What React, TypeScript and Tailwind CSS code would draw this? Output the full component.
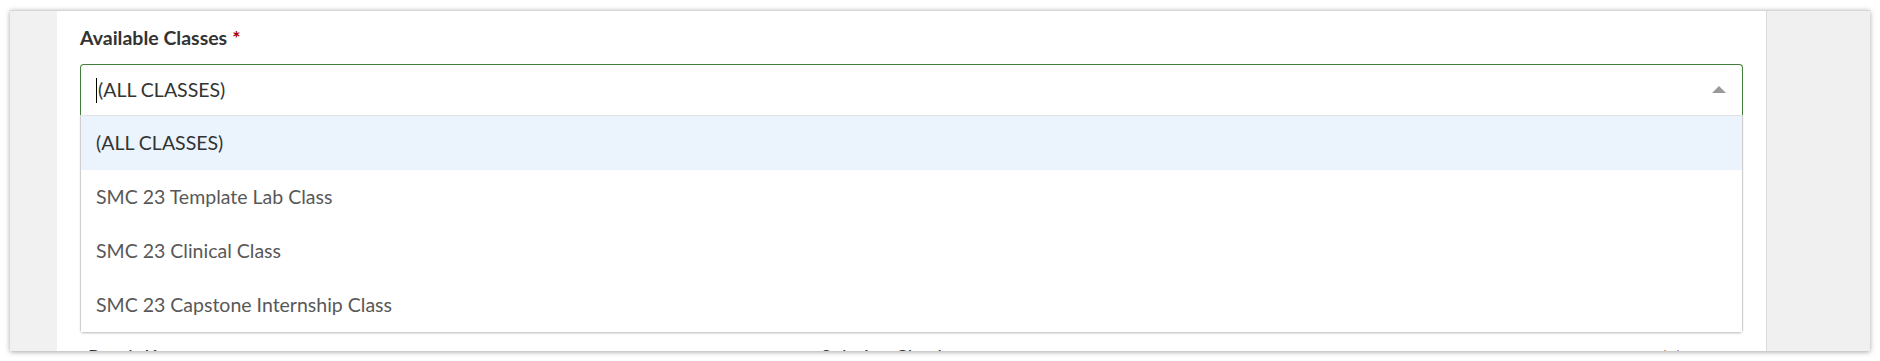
import React from "react";

const options = [
  "(ALL CLASSES)",
  "SMC 23 Template Lab Class",
  "SMC 23 Clinical Class",
  "SMC 23 Capstone Internship Class",
];

export default function App() {
  return (
    <div
      className="h-[361px] w-[1880px] bg-white p-[10px]"
      style={{ fontFamily: "Lato, 'Noto Sans', sans-serif" }}
    >
      <div className="flex h-[341px] overflow-hidden border-t border-[#d6d6d6] shadow-[0_1px_5px_rgba(0,0,0,0.35)]">
        <div className="w-[47px] shrink-0 bg-[#f1f1f1]" />
        <div className="flex-1 bg-white px-[23px] pt-[15px]">
          <div className="mb-[14px] flex h-[24px] items-center text-[19.5px] font-bold leading-[24px] text-[#333]">
            Available Classes
            <span className="ml-[5px] text-[#a30000]">*</span>
          </div>
          <div className="flex h-[51px] items-center rounded-t-[4px] border border-b-0 border-[#3f7f3b] pl-[15px] pr-[16px]">
            <span className="h-[25px] w-px bg-black" />
            <span className="ml-[1px] flex-1 text-[19.5px] text-[#333]">(ALL CLASSES)</span>
            <svg width="14" height="7" viewBox="0 0 14 7" className="mt-[-1px]">
              <polygon points="0,7 7,0 14,7" fill="#9a9a9a" />
            </svg>
          </div>
          <div className="rounded-b-[4px] border border-[#cfcfcf] border-t-[#e2e2e2] shadow-[0_1px_2px_rgba(0,0,0,0.12)]">
            {options.map((o, i) => (
              <div
                key={o}
                className={
                  "flex h-[54px] items-center pl-[15px] text-[19.5px] " +
                  (i === 0 ? "bg-[#ebf3fd] text-[#333]" : "bg-white text-[#585858]")
                }
              >
                {o}
              </div>
            ))}
          </div>
          <div className="mt-[12px] flex text-[19px] leading-[24px] text-[#333]">
            <div className="w-[741px] pl-[8px]">Result Key</div>
            <div className="w-[840px]">Solution Check</div>
            <div className="text-[#a30000]">* *</div>
          </div>
        </div>
        <div className="w-[104px] shrink-0 border-l border-[#dcdcdc] bg-[#f0f0f0]" />
      </div>
    </div>
  );
}
